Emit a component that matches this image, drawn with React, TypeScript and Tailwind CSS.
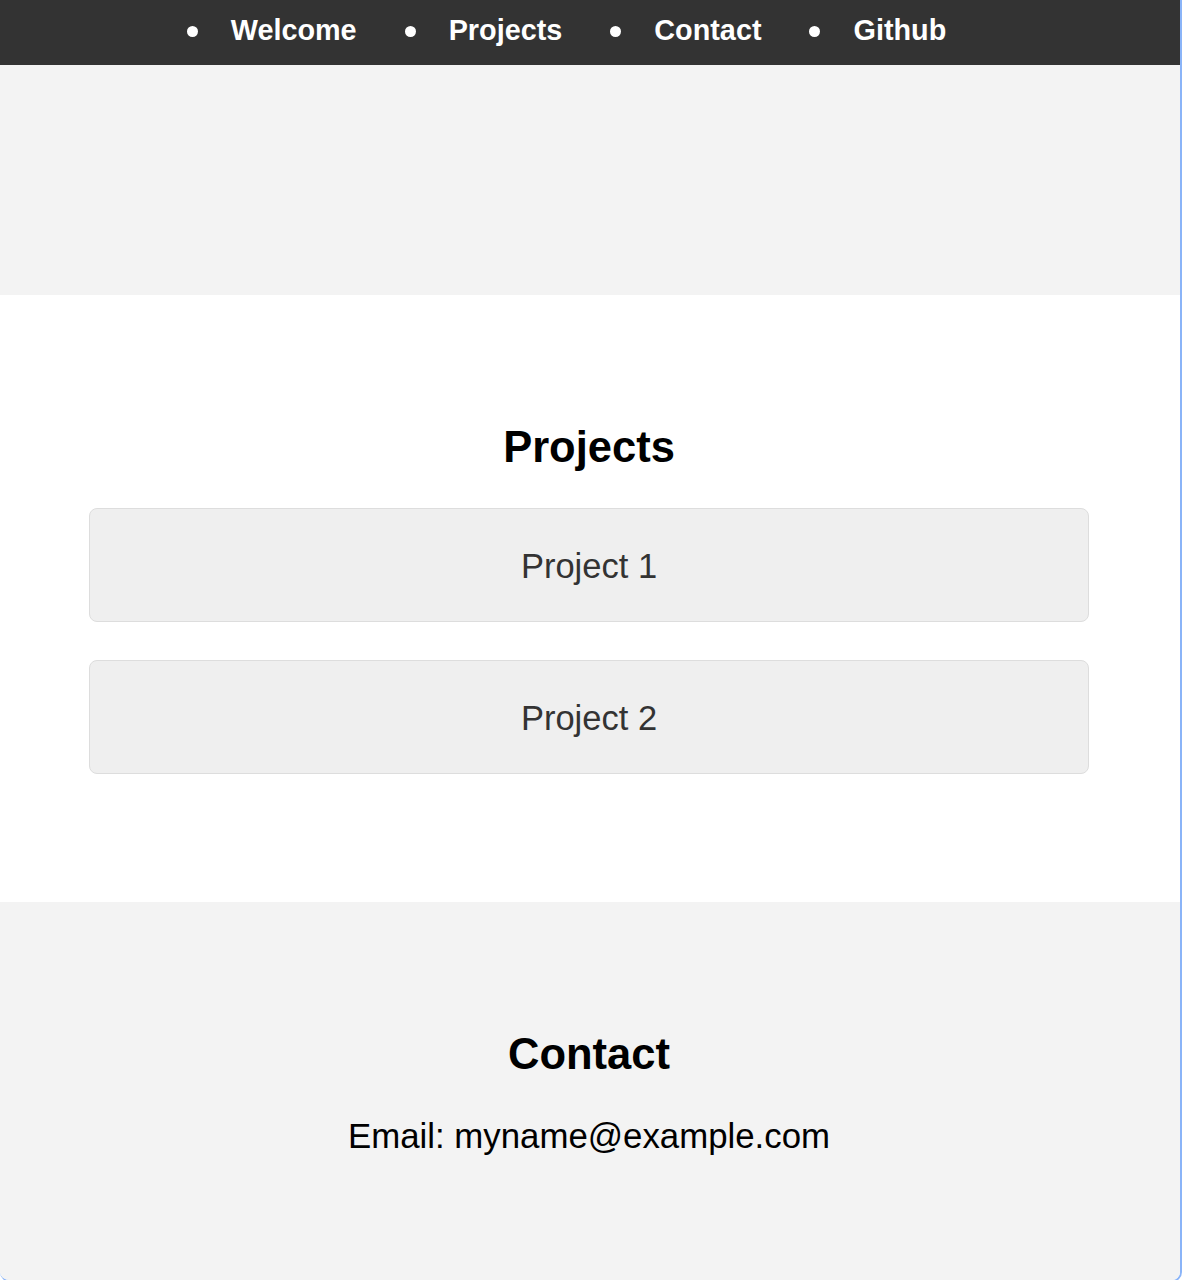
const links = ["Welcome", "Projects", "Contact", "Github"];
const projects = ["Project 1", "Project 2"];

export default function App() {
  return (
    <div className="h-[1280px] w-[1182px] overflow-hidden bg-white font-['Liberation_Sans',Arial,sans-serif]">
      <div className="flex h-[1282px] flex-col overflow-hidden rounded-b-[10px] border-r-2 border-b-2 border-[#8ab4f8]">
        <nav className="h-[65px] shrink-0 bg-[#333333] pt-[14px]">
          <ul className="flex justify-center gap-[92px] pr-[3px] text-[28.8px] leading-[33px] font-bold text-white">
            {links.map((l) => (
              <li key={l} className="relative">
                <span className="absolute top-[12px] left-[-44px] h-[11px] w-[11px] rounded-full bg-white" />
                <a href="#">{l}</a>
              </li>
            ))}
          </ul>
        </nav>

        <section className="h-[230px] shrink-0 bg-[#f3f3f3]" />

        <section className="shrink-0 bg-white pt-[127px] pr-[91px] pb-[128px] pl-[89px]">
          <h2 className="mb-[36px] text-center text-[43.5px] leading-[50px] font-bold text-black">Projects</h2>
          <div className="flex flex-col gap-[38px]">
            {projects.map((p) => (
              <div
                key={p}
                className="flex h-[114px] items-center justify-center rounded-[8px] border border-[#dddddd] bg-[#efefef] pt-[3px] text-[34.5px] text-[#333333]"
              >
                {p}
              </div>
            ))}
          </div>
        </section>

        <section className="flex-1 bg-[#f3f3f3] pt-[127px] pr-[2px] text-center">
          <h2 className="text-[43.5px] leading-[50px] font-bold text-black">Contact</h2>
          <p className="mt-[37px] text-[34.8px] leading-[40px] text-black">Email: myname@example.com</p>
        </section>
      </div>
    </div>
  );
}
